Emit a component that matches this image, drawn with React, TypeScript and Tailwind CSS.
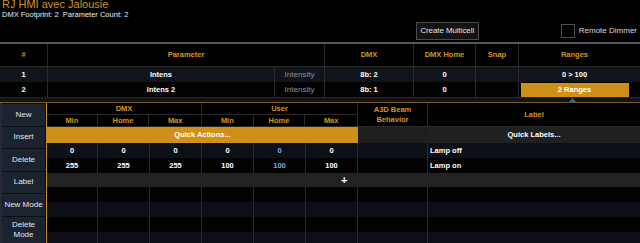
import React from 'react'

const LINE = 'border-[#2a2a2a]'
const LOW_COLS = ['w-[51px]', 'w-[52px]', 'w-[52px]', 'w-[52px]', 'w-[52px]', 'w-[52px]']
const BUTTONS = ['New', 'Insert', 'Delete', 'Label', 'New Mode']

function TopRow({ bg, n, name, dmx, home, ranges, active }: { bg: string; n: string; name: string; dmx: string; home: string; ranges: string; active?: boolean }) {
  return (
    <div className={`flex h-[15px] font-bold text-white ${bg}`}>
      <div className={`w-[48px] shrink-0 border-r ${LINE} flex items-center justify-center`}>{n}</div>
      <div className={`w-[227px] shrink-0 border-r ${LINE} flex items-center justify-center`}>{name}</div>
      <div className={`w-[50px] shrink-0 border-r ${LINE} flex items-center justify-center font-normal text-[8px] text-[#8f8f8f]`}>Intensity</div>
      <div className={`w-[89px] shrink-0 border-r ${LINE} flex items-center justify-center`}>{dmx}</div>
      <div className={`w-[62px] shrink-0 border-r ${LINE} flex items-center justify-center`}>{home}</div>
      <div className={`w-[43px] shrink-0 border-r ${LINE}`} />
      <div className="w-[111px] shrink-0 flex items-center justify-center">
        {active ? (
          <div className="w-[108px] h-[14px] bg-[#cf901a] flex items-center justify-center">{ranges}</div>
        ) : (
          ranges
        )}
      </div>
    </div>
  )
}

function LowRow({ bg, vals, label }: { bg: string; vals?: string[]; label?: string }) {
  return (
    <div className={`flex h-[15px] font-bold ${bg}`}>
      {LOW_COLS.map((w, i) => (
        <div key={i} className={`${w} shrink-0 border-r ${LINE} flex items-center justify-center ${i === 4 ? 'text-[#7ea9ea]' : 'text-white'}`}>
          {vals?.[i]}
        </div>
      ))}
      <div className={`w-[70px] shrink-0 border-r ${LINE}`} />
      <div className="flex-1 pl-[2px] flex items-center text-white">{label}</div>
    </div>
  )
}

export default function App() {
  return (
    <div className="w-[640px] h-[243px] overflow-hidden bg-black text-[7.5px] leading-none font-['Liberation_Sans',Arial,sans-serif]">
      {/* title bar */}
      <div className="h-[42px] flex justify-between">
        <div className="pl-[2px]">
          <div className="text-[11px] leading-none text-[#d4921e] -mt-px">RJ HMI avec Jalousie</div>
          <div className="mt-[1px] text-[7.5px] text-[#ececec] whitespace-pre">DMX Footprint: 2  Parameter Count: 2</div>
        </div>
        <div className="flex items-start pt-[22px] pr-[3px]">
          <div className="h-[18px] w-[63px] mr-[82px] border border-[#4a4a4a] bg-[#141414] text-[7.8px] text-[#e6e6e6] flex items-center justify-center">
            Create Multicell
          </div>
          <div className="mt-[2px] w-[14px] h-[14px] border border-[#4d4d4d]" />
          <div className="mt-[2px] h-[14px] ml-[4px] flex items-center text-[8px] text-[#d8d8d8]">Remote Dimmer</div>
        </div>
      </div>

      {/* parameter table */}
      <div className="border-t-2 border-[#575757]">
        <div className={`flex h-[23px] font-bold text-[#d4961e] border-b ${LINE}`}>
          <div className={`w-[48px] shrink-0 border-r ${LINE} flex items-center justify-center`}>#</div>
          <div className={`w-[277px] shrink-0 border-r ${LINE} flex items-center justify-center`}>Parameter</div>
          <div className={`w-[89px] shrink-0 border-r ${LINE} flex items-center justify-center`}>DMX</div>
          <div className={`w-[62px] shrink-0 border-r ${LINE} flex items-center justify-center`}>DMX Home</div>
          <div className={`w-[43px] shrink-0 border-r ${LINE} flex items-center justify-center`}>Snap</div>
          <div className="w-[111px] shrink-0 flex items-center justify-center">Ranges</div>
        </div>
        <TopRow bg="bg-[#10151c]" n="1" name="Intens" dmx="8b: 2" home="0" ranges="0 > 100" />
        <TopRow bg="bg-[#030303]" n="2" name="Intens 2" dmx="8b: 1" home="0" ranges="2 Ranges" active />
        <div className="relative h-[5px] bg-[#141414] border-t border-[#262626]">
          <svg className="absolute left-[568px] top-0" width="9" height="5" viewBox="0 0 9 5">
            <path d="M4.5 0 L9 5 L0 5 Z" fill="#4b5b6e" />
          </svg>
        </div>
      </div>

      {/* ranges editor */}
      <div className="flex border-t border-[#7a5c2c]">
        <div className="w-[46px] shrink-0 border-l-2 border-[#262b33] bg-[#0b0f15] pt-px flex flex-col gap-px">
          {BUTTONS.map(b => (
            <div key={b} className="w-[43px] h-[21.5px] bg-[#1b2330] text-[8px] text-[#e6e6e6] whitespace-nowrap flex items-center justify-center">
              {b}
            </div>
          ))}
          <div className="w-[43px] h-[26px] bg-[#1b2330] text-[8px] leading-[10px] text-[#e6e6e6] flex flex-col items-center justify-center">
            <div>Delete</div>
            <div>Mode</div>
          </div>
        </div>
        <div className="flex-1 border-l border-[#c98f1e]">
          <div className={`flex h-[24px] font-bold text-[#d4961e] border-b ${LINE}`}>
            <div className={`w-[155px] shrink-0 border-r ${LINE} flex flex-col`}>
              <div className={`h-[12px] border-b ${LINE} flex items-center justify-center`}>DMX</div>
              <div className="flex-1 flex">
                <div className={`w-[51px] border-r ${LINE} flex items-center justify-center`}>Min</div>
                <div className={`w-[52px] border-r ${LINE} flex items-center justify-center`}>Home</div>
                <div className="w-[52px] flex items-center justify-center">Max</div>
              </div>
            </div>
            <div className={`w-[156px] shrink-0 border-r ${LINE} flex flex-col`}>
              <div className={`h-[12px] border-b ${LINE} flex items-center justify-center`}>User</div>
              <div className="flex-1 flex">
                <div className={`w-[52px] border-r ${LINE} flex items-center justify-center`}>Min</div>
                <div className={`w-[52px] border-r ${LINE} flex items-center justify-center`}>Home</div>
                <div className="w-[52px] flex items-center justify-center">Max</div>
              </div>
            </div>
            <div className={`w-[70px] shrink-0 border-r ${LINE} flex flex-col items-center justify-center text-center leading-[10px]`}>
              <div>A3D Beam</div>
              <div>Behavior</div>
            </div>
            <div className="flex-1 flex items-center justify-center">Label</div>
          </div>
          <div className="flex h-[16px] font-bold text-white">
            <div className="w-[311px] shrink-0 bg-[#cf901a] flex items-center justify-center">Quick Actions...</div>
            <div className="w-[70px] shrink-0 bg-[#1e1e1e]" />
            <div className="flex-1 bg-[#202020] flex items-center justify-center">Quick Labels...</div>
          </div>
          <LowRow bg="bg-[#0d1117]" vals={['0', '0', '0', '0', '0', '0']} label="Lamp off" />
          <LowRow bg="bg-[#020202]" vals={['255', '255', '255', '100', '100', '100']} label="Lamp on" />
          <div className="h-[14px] bg-[#222222] flex items-center pl-[294px] text-white text-[11px] font-bold">+</div>
          <LowRow bg="bg-[#020202]" />
          <LowRow bg="bg-[#0c1016]" />
          <LowRow bg="bg-[#020202]" />
          <LowRow bg="bg-[#0c1016]" />
        </div>
      </div>
    </div>
  )
}
